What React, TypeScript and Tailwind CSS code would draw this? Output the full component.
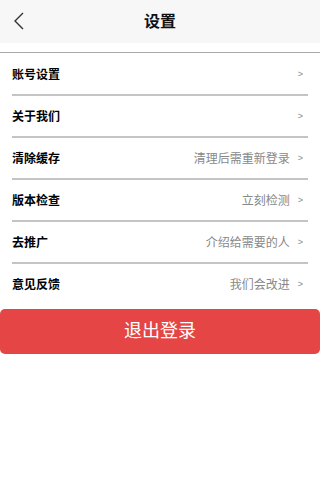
import React from "react";

interface Row {
  label: string;
  hint?: string;
}

const rows: Row[] = [
  { label: "账号设置" },
  { label: "关于我们" },
  { label: "清除缓存", hint: "清理后需重新登录" },
  { label: "版本检查", hint: "立刻检测" },
  { label: "去推广", hint: "介绍给需要的人" },
  { label: "意见反馈", hint: "我们会改进" },
];

export default function App() {
  return (
    <div
      className="w-[320px] h-[480px] bg-white"
      style={{ fontFamily: '"Liberation Sans", "Noto Sans CJK SC", sans-serif' }}
    >
      {/* 顶部栏 */}
      <div className="relative h-[43px] bg-[#f7f7f7] flex items-center justify-center">
        <svg
          className="absolute left-[13px] top-[12px]"
          width="12"
          height="18"
          viewBox="0 0 12 18"
          fill="none"
        >
          <polyline points="10,1 2,9 10,17" stroke="#333" strokeWidth="1.4" />
        </svg>
        <h1 className="text-[16px] font-bold text-[#111]">设置</h1>
      </div>

      <div className="h-[9px]" />
      <div className="h-px bg-[#a8a8a8]" />

      <div className="pt-px">
        {rows.map((r, i) => (
          <div
            key={r.label}
            className={`mx-[12px] pt-[1px] flex items-center justify-between ${
              i < rows.length - 1 ? "border-b-2 border-[#c4c4c4] h-[42px]" : "h-[40px]"
            }`}
          >
            <span className="text-[12px] font-bold text-black">{r.label}</span>
            <div className="flex items-center pr-[5px]">
              {r.hint && <span className="text-[12px] text-[#888]">{r.hint}</span>}
              <span className="ml-[8px] text-[9px] text-[#888]">&gt;</span>
            </div>
          </div>
        ))}
      </div>

      <button className="mt-[5px] w-full h-[45px] rounded-[5px] bg-[#e54545] text-white text-[18px]">
        退出登录
      </button>
    </div>
  );
}
